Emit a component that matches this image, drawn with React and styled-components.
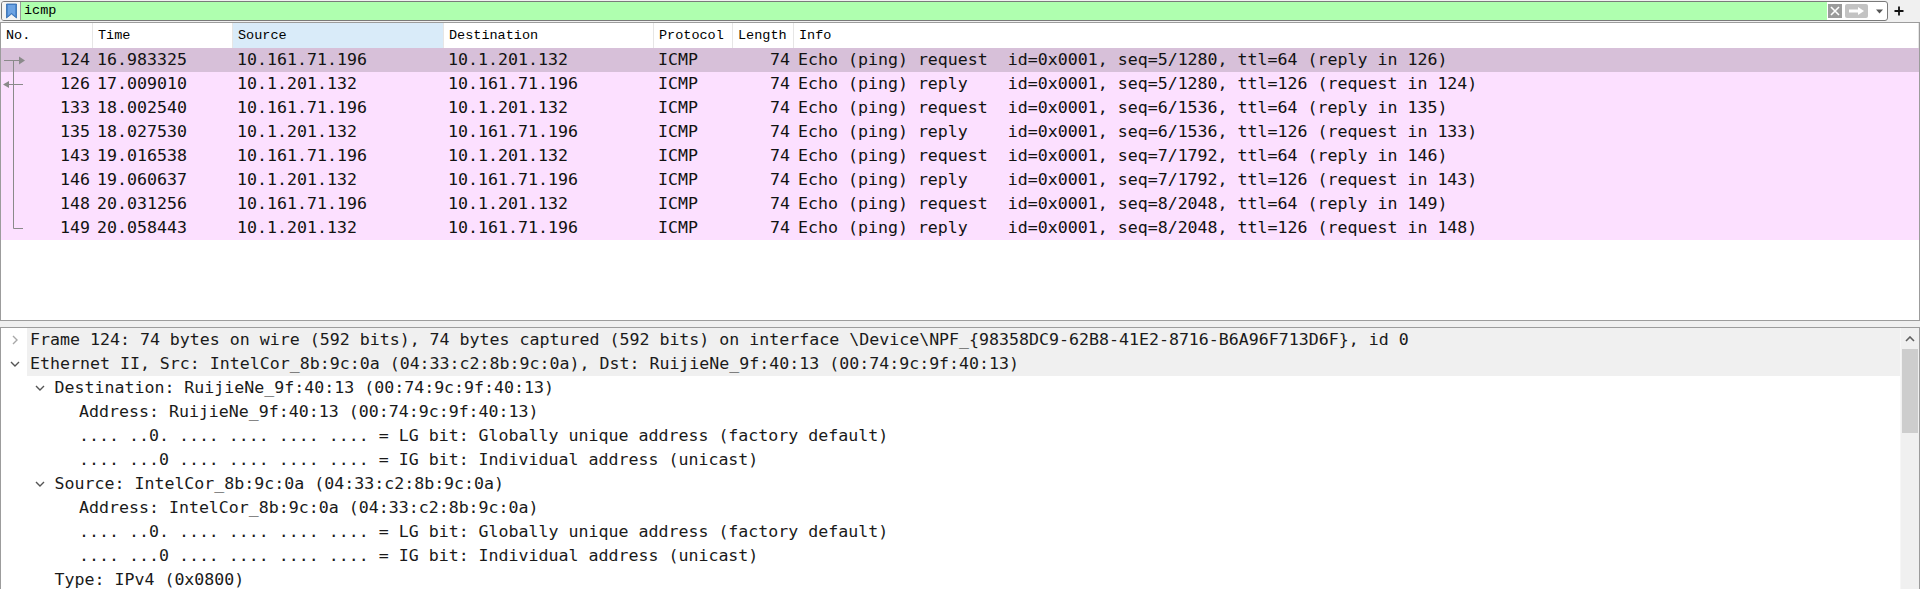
import React from 'react';
import styled, { createGlobalStyle } from 'styled-components';

const GlobalStyle = createGlobalStyle`
  html, body {
    margin: 0;
    padding: 0;
    background: #f0f0f0;
  }
  * {
    box-sizing: border-box;
  }
`;

const MONO = '"DejaVu Sans Mono", "Liberation Mono", monospace';
const UI = '"Liberation Mono", "DejaVu Sans Mono", monospace';

const Window = styled.div`
  width: 1920px;
  height: 589px;
  overflow: hidden;
  display: flex;
  flex-direction: column;
  background: #f0f0f0;
`;

/* ---------- display filter ---------- */

const FilterBar = styled.div`
  height: 22px;
  display: flex;
  align-items: flex-start;
  padding: 1px 0 0 1px;
`;

const FilterInput = styled.div`
  flex: 1;
  height: 20px;
  display: flex;
  border: 1px solid #7a7a7a;
  border-radius: 3px;
  overflow: hidden;
  background: #fff;
`;

const BookmarkBox = styled.div`
  width: 19px;
  display: flex;
  align-items: center;
  justify-content: center;
  border-right: 1px solid #9a9a9a;
  background: #f4f4f4;
`;

const FilterText = styled.div`
  flex: 1;
  background: #afffaf;
  font-family: ${UI};
  font-size: 13.5px;
  line-height: 18px;
  color: #000;
  padding-left: 3px;
`;

const FilterButtons = styled.div`
  width: 60px;
  display: flex;
  align-items: center;
  gap: 3px;
  padding-left: 1px;
`;

const ClearButton = styled.div`
  width: 14px;
  height: 14px;
  background: #9b9b9b;
  display: flex;
  align-items: center;
  justify-content: center;
`;

const ApplyButton = styled.div`
  width: 23px;
  height: 14px;
  border-radius: 2px;
  background: #c3c3c3;
  display: flex;
  align-items: center;
  justify-content: center;
`;

const DropButton = styled.div`
  flex: 1;
  height: 14px;
  display: flex;
  align-items: center;
  justify-content: center;
`;

const PlusButton = styled.div`
  width: 32px;
  height: 20px;
  display: flex;
  align-items: center;
  padding-left: 6px;
`;

/* ---------- packet list ---------- */

const PacketList = styled.div`
  height: 299px;
  border: 1px solid #9c9c9c;
  background: #fff;
  display: flex;
  flex-direction: column;
`;

const HeaderRow = styled.div`
  height: 25px;
  display: flex;
  background: #fff;
`;

const HeaderCell = styled.div`
  width: ${p => (p.$w ? `${p.$w}px` : 'auto')};
  flex: ${p => (p.$w ? 'none' : '1')};
  background: ${p => (p.$sorted ? '#d9ebf9' : '#fff')};
  border-right: 1px solid #e6e6e6;
  font-family: ${UI};
  font-size: 13.5px;
  line-height: 25px;
  color: #000;
  padding-left: 5px;
  white-space: nowrap;
`;

const PacketRow = styled.div`
  height: 24px;
  display: flex;
  background: ${p => (p.$selected ? '#d7c0d9' : '#fce0ff')};
  color: #121212;
  font-family: ${MONO};
  font-size: 16.6px;
  line-height: 24px;
`;

const Cell = styled.div`
  width: ${p => (p.$w ? `${p.$w}px` : 'auto')};
  flex: ${p => (p.$w ? 'none' : '1')};
  text-align: ${p => (p.$right ? 'right' : 'left')};
  padding: ${p => (p.$right ? '0 4px 0 0' : '0 0 0 4px')};
  white-space: pre;
  overflow: hidden;
`;

const NoCell = styled.div`
  width: 92px;
  display: flex;
  align-items: center;
`;

const NoText = styled.span`
  flex: 1;
  text-align: right;
  padding-right: 3px;
`;

const Splitter = styled.div`
  height: 6px;
`;

/* ---------- packet details ---------- */

const DetailPane = styled.div`
  flex: 1;
  display: flex;
  border: 1px solid #9c9c9c;
  border-bottom: none;
  background: #fff;
  min-height: 0;
`;

const Tree = styled.div`
  flex: 1;
  display: flex;
  flex-direction: column;
`;

const TreeRow = styled.div`
  height: 24px;
  display: flex;
  align-items: center;
  padding-left: ${p => 4 + p.$level * 24.5}px;
`;

const Toggle = styled.div`
  width: 22px;
  height: 24px;
  display: flex;
  align-items: center;
  justify-content: center;
  padding-right: 2px;
`;

const TreeLabel = styled.div`
  flex: 1;
  height: 24px;
  padding-left: 3px;
  background: ${p => (p.$shaded ? '#f0f0f0' : 'transparent')};
  font-family: ${MONO};
  font-size: 16.6px;
  line-height: 24px;
  color: #1a1a1a;
  white-space: pre;
`;

const Scrollbar = styled.div`
  width: 19px;
  display: flex;
  flex-direction: column;
  background: #f0f0f0;
  border-left: 1px solid #f6f6f6;
`;

const ScrollArrow = styled.div`
  height: 21px;
  display: flex;
  align-items: center;
  justify-content: center;
`;

const ScrollThumb = styled.div`
  height: 84px;
  margin: 0 1px;
  background: #cdcdcd;
`;

/* ---------- icons ---------- */

const Bookmark = () => (
  <svg width="13" height="16" viewBox="0 0 13 16">
    <path d="M1.5 1 H11.5 V15 L6.5 11 L1.5 15 Z" fill="#4b87cf" />
    <path d="M3 2 H10 V12.5 L6.5 9.8 L3 12.5 Z" fill="#6da3e3" />
    <path d="M1.5 1 H11.5 V15 L6.5 11 L1.5 15 Z" fill="none" stroke="#2f68ae" strokeWidth="0.8" />
  </svg>
);

const ClearIcon = () => (
  <svg width="10" height="10" viewBox="0 0 10 10">
    <path d="M1 1 L9 9 M9 1 L1 9" stroke="#fff" strokeWidth="1.6" />
  </svg>
);

const ArrowIcon = () => (
  <svg width="17" height="10" viewBox="0 0 17 10">
    <path d="M1 3.5 H10 V1 L16 5 L10 9 V6.5 H1 Z" fill="#fff" />
  </svg>
);

const DropIcon = () => (
  <svg width="7" height="5" viewBox="0 0 7 5">
    <path d="M0 0.5 H7 L3.5 4.5 Z" fill="#555" />
  </svg>
);

const PlusIcon = () => (
  <svg width="10" height="10" viewBox="0 0 10 10">
    <path d="M5 0.5 V9.5 M0.5 5 H9.5" stroke="#111" strokeWidth="1.8" />
  </svg>
);

const Related = ({ kind }) => {
  const c = '#8a8a8a';
  return (
    <svg width="26" height="24" viewBox="0 0 26 24">
      {kind === 'first' && (
        <>
          <path d="M12.5 12 V24 M3 12.5 H19" stroke={c} strokeWidth="1" />
          <path d="M18 8.5 L24 12.5 L18 16.5 Z" fill={c} />
        </>
      )}
      {kind === 'reply' && (
        <>
          <path d="M12.5 0 V24 M7 12.5 H22" stroke={c} strokeWidth="1" />
          <path d="M2 12.5 L8 9 L8 16 Z" fill={c} />
        </>
      )}
      {kind === 'mid' && <path d="M12.5 0 V24" stroke={c} strokeWidth="1" />}
      {kind === 'last' && <path d="M12.5 0 V12.5 H22" stroke={c} strokeWidth="1" fill="none" />}
    </svg>
  );
};

const Chevron = ({ open }) =>
  open ? (
    <svg width="10" height="6" viewBox="0 0 10 6">
      <path d="M1 1 L5 5 L9 1" stroke="#555" strokeWidth="1.4" fill="none" />
    </svg>
  ) : (
    <svg width="6" height="10" viewBox="0 0 6 10">
      <path d="M1 1 L5 5 L1 9" stroke="#a8a8a8" strokeWidth="1.4" fill="none" />
    </svg>
  );

const UpIcon = () => (
  <svg width="10" height="6" viewBox="0 0 10 6">
    <path d="M1 5 L5 1 L9 5" stroke="#606060" strokeWidth="1.6" fill="none" />
  </svg>
);

/* ---------- data ---------- */

const columns = [
  { title: 'No.', w: 92 },
  { title: 'Time', w: 140 },
  { title: 'Source', w: 211, sorted: true },
  { title: 'Destination', w: 210 },
  { title: 'Protocol', w: 79 },
  { title: 'Length', w: 61 },
  { title: 'Info' },
];

const A = '10.161.71.196';
const B = '10.1.201.132';

const packets = [
  { no: 124, time: '16.983325', src: A, dst: B, info: 'Echo (ping) request  id=0x0001, seq=5/1280, ttl=64 (reply in 126)', mark: 'first', selected: true },
  { no: 126, time: '17.009010', src: B, dst: A, info: 'Echo (ping) reply    id=0x0001, seq=5/1280, ttl=126 (request in 124)', mark: 'reply' },
  { no: 133, time: '18.002540', src: A, dst: B, info: 'Echo (ping) request  id=0x0001, seq=6/1536, ttl=64 (reply in 135)', mark: 'mid' },
  { no: 135, time: '18.027530', src: B, dst: A, info: 'Echo (ping) reply    id=0x0001, seq=6/1536, ttl=126 (request in 133)', mark: 'mid' },
  { no: 143, time: '19.016538', src: A, dst: B, info: 'Echo (ping) request  id=0x0001, seq=7/1792, ttl=64 (reply in 146)', mark: 'mid' },
  { no: 146, time: '19.060637', src: B, dst: A, info: 'Echo (ping) reply    id=0x0001, seq=7/1792, ttl=126 (request in 143)', mark: 'mid' },
  { no: 148, time: '20.031256', src: A, dst: B, info: 'Echo (ping) request  id=0x0001, seq=8/2048, ttl=64 (reply in 149)', mark: 'mid' },
  { no: 149, time: '20.058443', src: B, dst: A, info: 'Echo (ping) reply    id=0x0001, seq=8/2048, ttl=126 (request in 148)', mark: 'last' },
];

const details = [
  { level: 0, toggle: 'closed', shaded: true, text: 'Frame 124: 74 bytes on wire (592 bits), 74 bytes captured (592 bits) on interface \\Device\\NPF_{98358DC9-62B8-41E2-8716-B6A96F713D6F}, id 0' },
  { level: 0, toggle: 'open', shaded: true, text: 'Ethernet II, Src: IntelCor_8b:9c:0a (04:33:c2:8b:9c:0a), Dst: RuijieNe_9f:40:13 (00:74:9c:9f:40:13)' },
  { level: 1, toggle: 'open', text: 'Destination: RuijieNe_9f:40:13 (00:74:9c:9f:40:13)' },
  { level: 2, text: 'Address: RuijieNe_9f:40:13 (00:74:9c:9f:40:13)' },
  { level: 2, text: '.... ..0. .... .... .... .... = LG bit: Globally unique address (factory default)' },
  { level: 2, text: '.... ...0 .... .... .... .... = IG bit: Individual address (unicast)' },
  { level: 1, toggle: 'open', text: 'Source: IntelCor_8b:9c:0a (04:33:c2:8b:9c:0a)' },
  { level: 2, text: 'Address: IntelCor_8b:9c:0a (04:33:c2:8b:9c:0a)' },
  { level: 2, text: '.... ..0. .... .... .... .... = LG bit: Globally unique address (factory default)' },
  { level: 2, text: '.... ...0 .... .... .... .... = IG bit: Individual address (unicast)' },
  { level: 1, text: 'Type: IPv4 (0x0800)' },
];

const App = () => (
  <>
    <GlobalStyle />
    <Window>
      <FilterBar>
        <FilterInput>
          <BookmarkBox>
            <Bookmark />
          </BookmarkBox>
          <FilterText>icmp</FilterText>
          <FilterButtons>
            <ClearButton>
              <ClearIcon />
            </ClearButton>
            <ApplyButton>
              <ArrowIcon />
            </ApplyButton>
            <DropButton>
              <DropIcon />
            </DropButton>
          </FilterButtons>
        </FilterInput>
        <PlusButton>
          <PlusIcon />
        </PlusButton>
      </FilterBar>

      <PacketList>
        <HeaderRow>
          {columns.map(col => (
            <HeaderCell key={col.title} $w={col.w} $sorted={col.sorted}>
              {col.title}
            </HeaderCell>
          ))}
        </HeaderRow>
        {packets.map(p => (
          <PacketRow key={p.no} $selected={p.selected}>
            <NoCell>
              <Related kind={p.mark} />
              <NoText>{p.no}</NoText>
            </NoCell>
            <Cell $w={140}>{p.time}</Cell>
            <Cell $w={211}>{p.src}</Cell>
            <Cell $w={210}>{p.dst}</Cell>
            <Cell $w={79}>ICMP</Cell>
            <Cell $w={61} $right>74</Cell>
            <Cell>{p.info}</Cell>
          </PacketRow>
        ))}
      </PacketList>

      <Splitter />

      <DetailPane>
        <Tree>
          {details.map((d, i) => (
            <TreeRow key={i} $level={d.level}>
              <Toggle>{d.toggle && <Chevron open={d.toggle === 'open'} />}</Toggle>
              <TreeLabel $shaded={d.shaded}>{d.text}</TreeLabel>
            </TreeRow>
          ))}
        </Tree>
        <Scrollbar>
          <ScrollArrow>
            <UpIcon />
          </ScrollArrow>
          <ScrollThumb />
        </Scrollbar>
      </DetailPane>
    </Window>
  </>
);

export default App;
